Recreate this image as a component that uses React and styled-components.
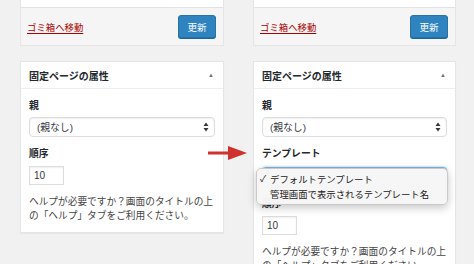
import React from "react";
import styled, { createGlobalStyle } from "styled-components";

const GlobalStyle = createGlobalStyle`
  html, body {
    margin: 0;
    padding: 0;
    background: #f1f1f1;
  }
  body {
    font-family: "Liberation Sans", "Noto Sans CJK JP", sans-serif;
    color: #23282d;
  }
`;

const Page = styled.div`
  position: relative;
  display: flex;
  width: 474px;
  height: 264px;
  overflow: hidden;
  background: #f1f1f1;
`;

const Shot = styled.div`
  width: ${(p) => p.$width}px;
  padding-left: 20px;
  box-sizing: border-box;
`;

const PublishBox = styled.div`
  width: ${(p) => p.$width}px;
  background: #fff;
  border: 1px solid #e5e5e5;
  border-top: none;
  box-sizing: border-box;
`;

const TopSpace = styled.div`
  height: 7px;
`;

const PublishFooter = styled.div`
  display: flex;
  align-items: center;
  justify-content: space-between;
  height: 37px;
  padding: 0 7px 0 6px;
  background: #f5f5f5;
  border-top: 1px solid #e2e2e2;
`;

const TrashLink = styled.a`
  color: #a00;
  font-size: 9.4px;
  text-decoration: underline;
  text-underline-offset: 2px;
`;

const UpdateButton = styled.button`
  width: 38px;
  height: 23px;
  padding: 0;
  border: 1px solid #2773a8;
  border-radius: 3px;
  background: #2f84bf;
  color: #fff;
  font-family: inherit;
  font-size: 9.6px;
  box-shadow: 0 1px 0 #1f6496;
`;

const Panel = styled.div`
  width: ${(p) => p.$width}px;
  margin-top: 15px;
  background: #fff;
  border: 1px solid #e5e5e5;
  box-sizing: border-box;
  box-shadow: 0 1px 1px rgba(0, 0, 0, 0.04);
`;

const PanelHeader = styled.div`
  display: flex;
  align-items: center;
  justify-content: space-between;
  height: 26px;
  padding: 0 9px 0 8px;
  border-bottom: 1px solid #eee;
`;

const PanelTitle = styled.h2`
  margin: 0;
  font-size: 10px;
  font-weight: 700;
  color: #23282d;
`;

const Toggle = styled.span`
  font-size: 6px;
  color: #72777c;
`;

const PanelBody = styled.div`
  padding: 0 8px 9px 8px;
`;

const Label = styled.div`
  height: 14px;
  margin-top: 10px;
  line-height: 14px;
  font-size: 9.8px;
  font-weight: 700;
  color: #23282d;
`;

const SelectWrap = styled.div`
  position: relative;
  margin-top: ${(p) => p.$gap}px;
`;

const SelectBox = styled.div`
  display: flex;
  align-items: center;
  justify-content: space-between;
  height: 20px;
  padding: 0 5px 0 7px;
  border: 1px solid ${(p) => (p.$focus ? "#7fb0de" : "#ddd")};
  border-radius: 4px;
  box-sizing: border-box;
  background: #fff;
  font-size: 9.8px;
  color: #32373c;
  box-shadow: ${(p) =>
    p.$focus ? "0 0 2px rgba(30, 140, 190, 0.6)" : "inset 0 1px 2px rgba(0,0,0,0.07)"};
`;

const NumberInput = styled.div`
  width: 35px;
  height: 19px;
  margin-top: 5px;
  padding-left: 4px;
  border: 1px solid #ddd;
  box-sizing: border-box;
  line-height: 17px;
  font-size: 10px;
  color: #32373c;
  box-shadow: inset 0 1px 2px rgba(0, 0, 0, 0.07);
`;

const Help = styled.p`
  margin: 10px 0 0;
  line-height: 14px;
  font-size: 9.7px;
  color: #444;
  white-space: nowrap;
`;

const Popup = styled.div`
  position: absolute;
  top: 1px;
  left: -6px;
  right: -1px;
  padding: 2px 0 3px;
  background: rgba(246, 246, 246, 0.98);
  border: 1px solid #c9c9c9;
  border-radius: 5px;
  box-shadow: 0 3px 8px rgba(0, 0, 0, 0.22);
  z-index: 2;
`;

const PopupItem = styled.div`
  display: flex;
  align-items: center;
  height: 15px;
  font-size: 9.4px;
  color: #222;
`;

const Check = styled.span`
  width: 13px;
  padding-left: 3px;
  box-sizing: border-box;
  font-size: 9px;
`;

const ArrowMark = styled.svg`
  position: absolute;
  left: 208px;
  top: 145px;
  z-index: 3;
`;

const SelectArrows = () => (
  <svg width="6" height="10" viewBox="0 0 6 10">
    <path d="M3 0.5 L5.5 4 L0.5 4 Z" fill="#32373c" />
    <path d="M3 9.5 L5.5 6 L0.5 6 Z" fill="#32373c" />
  </svg>
);

const Publish = ({ width }) => (
  <PublishBox $width={width}>
    <TopSpace />
    <PublishFooter>
      <TrashLink>ゴミ箱へ移動</TrashLink>
      <UpdateButton>更新</UpdateButton>
    </PublishFooter>
  </PublishBox>
);

const Attributes = ({ width, withTemplate }) => (
  <Panel $width={width}>
    <PanelHeader>
      <PanelTitle>固定ページの属性</PanelTitle>
      <Toggle>▲</Toggle>
    </PanelHeader>
    <PanelBody>
      <Label>親</Label>
      <SelectWrap $gap={4}>
        <SelectBox>
          (親なし)
          <SelectArrows />
        </SelectBox>
      </SelectWrap>
      {withTemplate && (
        <>
          <Label>テンプレート</Label>
          <SelectWrap $gap={6}>
            {/* the open menu covers the closed select's text */}
            <SelectBox $focus />
            <Popup>
              <PopupItem>
                <Check>✓</Check>
                デフォルトテンプレート
              </PopupItem>
              <PopupItem>
                <Check />
                管理画面で表示されるテンプレート名
              </PopupItem>
            </Popup>
          </SelectWrap>
        </>
      )}
      <Label>順序</Label>
      <NumberInput>10</NumberInput>
      <Help>
        ヘルプが必要ですか？画面のタイトルの上
        <br />
        の「ヘルプ」タブをご利用ください。
      </Help>
    </PanelBody>
  </Panel>
);

const App = () => (
  <>
    <GlobalStyle />
    <Page>
      <Shot $width={233}>
        <Publish width={204} />
        <Attributes width={204} />
      </Shot>
      <Shot $width={241}>
        <Publish width={203} />
        <Attributes width={203} withTemplate />
      </Shot>
      <ArrowMark width="40" height="16" viewBox="0 0 40 16">
        <rect x="0" y="6.5" width="21" height="3" fill="#d0312d" />
        <path d="M20 1 L39 8 L20 15 Z" fill="#d0312d" />
      </ArrowMark>
    </Page>
  </>
);

export default App;
